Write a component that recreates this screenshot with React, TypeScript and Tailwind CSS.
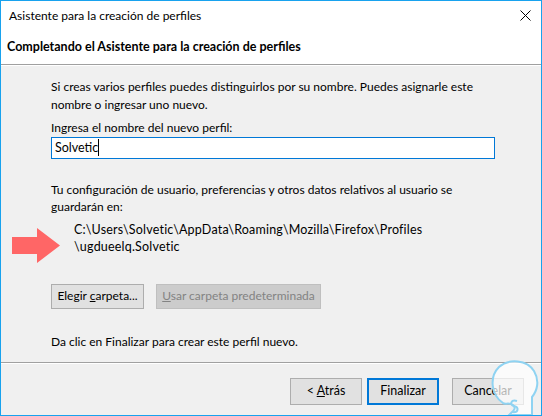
export default function App() {
  return (
    <div className="w-[542px] h-[416px] border border-[#18a2ee] bg-[#f0f0f0] flex flex-col font-['Lato','Noto_Sans',sans-serif] text-[12px] text-black overflow-hidden relative">
      {/* Header */}
      <div className="bg-white border-b border-[#a0a0a0]">
        <div className="h-[30px] flex items-center justify-between pl-[8px] pr-[10px]">
          <span>Asistente para la creación de perfiles</span>
          <svg width="11" height="11" viewBox="0 0 11 11" className="mt-[-2px]">
            <path d="M0.5 0.5 L10.5 10.5 M10.5 0.5 L0.5 10.5" stroke="#000" strokeWidth="1" />
          </svg>
        </div>
        <div className="h-[33px] flex items-center pl-[6px] font-bold text-[12.5px]">
          Completando el Asistente para la creación de perfiles
        </div>
      </div>
      <div className="h-px bg-white" />

      {/* Content */}
      <div className="h-[296px] pl-[50px] pt-[12px] leading-[17.5px]">
        <p>
          Si creas varios perfiles puedes distinguirlos por su nombre. Puedes asignarle este
          <br />
          nombre o ingresar uno nuevo.
        </p>
        <p className="mt-[6px]">Ingresa el nombre del nuevo perfil:</p>
        <div className="w-[444px] h-[22px] border border-[#0078d7] bg-white flex items-center pl-[3px] text-[12.5px]">
          <span>Solvetic</span>
          <span className="inline-block w-px h-[17px] bg-black" />
        </div>
        <p className="mt-[22px]">
          Tu configuración de usuario, preferencias y otros datos relativos al usuario se
          <br />
          guardarán en:
        </p>
        <div className="-ml-[39px] mt-[5px] flex items-start">
          <svg width="48" height="35" viewBox="0 0 48 35" className="mt-[7px]">
            <path d="M0 9 H25 V0 L48 17.5 L25 35 V26 H0 Z" fill="#ff6666" />
          </svg>
          <p className="ml-[14px] text-[12.5px] tracking-[0.2px]">
            C:\Users\Solvetic\AppData\Roaming\Mozilla\Firefox\Profiles
            <br />
            \ugdueelq.Solvetic
          </p>
        </div>
        <div className="mt-[21px] flex gap-[12px]">
          <button className="w-[93px] h-[25px] bg-[#e1e1e1] border border-[#adadad]">
            Elegir <span className="underline">c</span>arpeta...
          </button>
          <button className="w-[165px] h-[25px] bg-[#cccccc] border border-[#bfbfbf] text-[#838383]">
            <span className="underline">U</span>sar carpeta predeterminada
          </button>
        </div>
        <p className="mt-[24px]">Da clic en Finalizar para crear este perfil nuevo.</p>
      </div>

      {/* Footer */}
      <div className="border-t border-[#a0a0a0]" />
      <div className="h-px bg-white" />
      <div className="flex-1 flex justify-end items-start pt-[14px] pr-[17px] text-[12.5px]">
        <button className="w-[72px] h-[27px] bg-[#e1e1e1] border border-[#adadad]">
          &lt; <span className="underline">A</span>trás
        </button>
        <button className="w-[72px] h-[27px] ml-[5px] bg-[#e1e1e1] border-2 border-[#0078d7]">
          Finalizar
        </button>
        <button className="w-[72px] h-[27px] ml-[13px] bg-[#e1e1e1] border border-[#adadad]">
          Cancelar
        </button>
      </div>

      {/* Watermark logo */}
      <svg width="58" height="56" viewBox="0 0 58 56" className="absolute right-0 bottom-0 pointer-events-none">
        <path
          d="M20 44 C8 36 6 18 16 8 C26 -1 44 1 51 12 C57 22 54 32 49 38 L49 56 L26 56 C30 52 34 50 30 46 C26 43 22 46 20 44 Z"
          fill="rgba(255,255,255,0.7)"
          stroke="#8fd3f2"
          strokeWidth="2"
        />
        <path d="M34 42 C28 40 26 46 31 47 C36 48 36 54 29 53" fill="none" stroke="#8fd3f2" strokeWidth="2" />
      </svg>
    </div>
  )
}
